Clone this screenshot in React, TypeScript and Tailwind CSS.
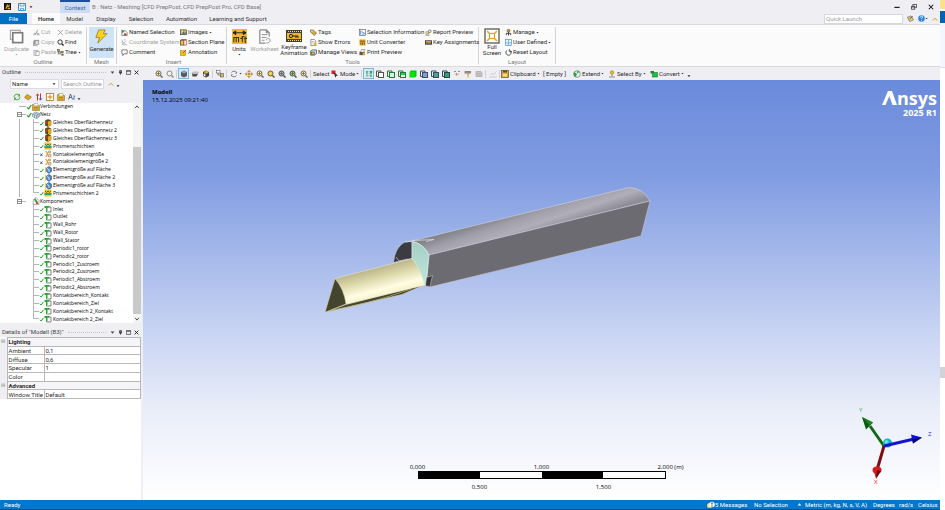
import type { ReactNode } from "react";
import clsx from "clsx";

const box = (fill: string, stroke = "#333") => (
  <>
    <path d="M1 4v9h3M1 4V2h9v2" fill="none" stroke={stroke} strokeWidth="2" />
    <rect x="5" y="5" width="10" height="10" fill={fill} stroke={stroke} strokeWidth="2" />
  </>
);

const lens = (fill: string, handle: string, mark: ReactNode = null) => (
  <>
    <circle cx="7" cy="7" r="5" fill={fill} stroke={handle} strokeWidth="2" />
    <path d="M11 11l4 4" stroke={handle} strokeWidth="3" />
    {mark}
  </>
);

const cross = <path d="M7 4v6M4 7h6" stroke="#7a5a00" strokeWidth="1.5" />;

const icons: Record<string, ReactNode> = {
  app: (
    <>
      <rect width="16" height="16" fill="#161310" />
      <path d="M3 13L7 3l3 1-4 9zM8 8l5-5v4l-4 3zM9 11h5v3H8z" fill="#e8ab1c" />
    </>
  ),
  save: (
    <>
      <path d="M1 1h14v14H1z" fill="#eef6fd" stroke="#3c8fd0" strokeWidth="2" />
      <path d="M4 1v5h8V1M5 15v-4h6v4" fill="none" stroke="#3c8fd0" strokeWidth="1.5" />
    </>
  ),
  duplicate: (
    <>
      <path d="M1.500 11V1.500H12" fill="none" stroke="#a9a9a9" strokeWidth="1.200" />
      <rect x="4" y="4" width="10.500" height="10.500" fill="#fff" stroke="#7c7c7c" strokeWidth="1.800" />
      <path d="M1 11h2M12 1v2" stroke="#8a8a8a" />
    </>
  ),
  cut: <path d="M5 13L11 2M11 13L7 6M1 13h5M9 13h6M2 10h4M10 10h4" stroke="#9b9b9b" strokeWidth="2" />,
  copy: (
    <>
      <rect x="2" y="2" width="12" height="11" fill="#999" />
      <rect x="6" y="5" width="6" height="6" fill="#e8e8e8" />
      <path d="M1 5v10h9" fill="none" stroke="#777" strokeWidth="1.5" />
    </>
  ),
  paste: (
    <>
      <rect x="2" y="3" width="9" height="12" fill="#ddd" stroke="#aaa" strokeWidth="1.5" />
      <rect x="7" y="6" width="7" height="9" fill="#fff" stroke="#999" strokeWidth="1.5" />
    </>
  ),
  delete: <path d="M2 2l12 12M14 2L2 14" stroke="#8d8d8d" strokeWidth="1.6" />,
  find: lens("#fff", "#222"),
  tree: (
    <>
      <path d="M3 3v8h6M3 7h8" fill="none" stroke="#333" strokeWidth="1.5" />
      <rect x="1" y="1" width="5" height="4" fill="#d9a520" stroke="#333" />
      <rect x="9" y="5" width="5" height="4" fill="#d9a520" stroke="#333" />
      <rect x="10" y="11" width="5" height="4" fill="#555" />
    </>
  ),
  bolt: <path d="M5 1h7l-2 4h4L4 15l2-6H2z" fill="#ffd21c" stroke="#9a7412" strokeWidth=".8" />,
  named: (
    <>
      <path d="M2 4h8l4 4v7H2z" fill="#fff" stroke="#555" strokeWidth="1.5" />
      <path d="M1 1l7 5-5 3z" fill="#16a34a" />
      <path d="M9 8l5 6H6z" fill="#c0392b" />
    </>
  ),
  coord: <path d="M3 2v11h11M3 13L12 4M2 5l10 8M6 2h5" fill="none" stroke="#b0b0b0" strokeWidth="1.6" />,
  comment: <path d="M2 2h12v9H7l-3 4v-4H2z" fill="#fff" stroke="#444" strokeWidth="1.5" />,
  images: (
    <>
      <rect x="1" y="2" width="14" height="11" fill="#f4d35e" stroke="#333" strokeWidth="1.5" />
      <path d="M3 11l4-5 3 3 3-4v6z" fill="#3a6fb0" />
      <path d="M9 2v11" stroke="#333" />
    </>
  ),
  section: (
    <>
      <path d="M1 3h8v11H1z" fill="#efc12e" stroke="#333" strokeWidth="1.5" />
      <path d="M9 3h6v11H9z" fill="#fff" stroke="#c0392b" strokeWidth="1.5" />
      <path d="M1 3l3-2h11" fill="none" stroke="#333" strokeWidth="1.5" />
    </>
  ),
  annotation: (
    <>
      <rect x="1" y="4" width="12" height="11" fill="#f1c40f" stroke="#8a6d0b" />
      <path d="M6 10l8-8" stroke="#c0392b" strokeWidth="2" />
    </>
  ),
  units: (
    <>
      <rect width="16" height="16" fill="#f0b92c" />
      <path d="M1 4h14M1 4l3-2v4zM15 4l-3-2v4z" fill="#222" stroke="#222" />
      <path d="M2 14V9h5v5M4.500 9v5M11 14V8h2M9 10h3M14 8v6h1M13 10h3" fill="none" stroke="#3a2d08" strokeWidth="1.100" />
    </>
  ),
  worksheet: (
    <>
      <path d="M3 1h7l3 3v4M3 1v14h6M10 1v3h3" fill="none" stroke="#8c8c8c" strokeWidth="1.300" />
      <path d="M5 6h6M5 9h5M5 12h3" stroke="#8c8c8c" />
      <path d="M10 12c0-3 4-2 4 0s-2 3-4 3" fill="none" stroke="#8c8c8c" />
    </>
  ),
  keyframe: (
    <>
      <rect y="2" width="16" height="12" fill="#4a4228" />
      <rect x="1" y="5" width="14" height="6" fill="#edb52b" />
      <path d="M2 3.500h13M2 12.500h13" stroke="#f4d98e" strokeDasharray="1 1" />
      <circle cx="5" cy="8" r="1.600" fill="none" stroke="#222" />
      <path d="M7 8h5v2M10 8v2" fill="none" stroke="#222" />
    </>
  ),
  tags: (
    <>
      <path d="M1 2h6l8 7-5 6-9-8z" fill="#d7a93a" stroke="#555" strokeWidth="1.300" />
      <circle cx="4.500" cy="5" r="1.300" fill="#fff" />
    </>
  ),
  errors: (
    <>
      <path d="M2 1h8l3 3v11H2z" fill="#fff" stroke="#555" strokeWidth="1.400" />
      <path d="M4 6h6M4 9h4" stroke="#666" />
      <path d="M11 7l5 8H7z" fill="#e6b422" />
    </>
  ),
  views: (
    <>
      <path d="M1 5l4-3h10v8l-4 4H1z" fill="#bcd4ee" stroke="#333" strokeWidth="1.400" />
      <rect x="3" y="7" width="7" height="6" fill="#e2b23a" stroke="#333" />
    </>
  ),
  info: (
    <>
      <rect x="1" y="1" width="14" height="14" fill="#fff" stroke="#555" strokeWidth="1.400" />
      <path d="M4 3v10M6 6l7 4M8 12l5-1" stroke="#2f7ed8" strokeWidth="2" />
    </>
  ),
  converter: (
    <>
      <rect x="1" y="1" width="14" height="14" fill="#e8b02e" />
      <path d="M2 5h12M4 8v5M8 8v5M12 8v5" stroke="#403208" strokeWidth="1.600" />
    </>
  ),
  print: (
    <>
      <rect x="1" y="6" width="12" height="8" fill="#655a43" />
      <path d="M4 6l2-5h7l-2 5" fill="#fff" stroke="#333" />
      <circle cx="11" cy="11" r="3" fill="#e0ac2c" />
    </>
  ),
  report: (
    <>
      <path d="M2 6h7v9H2z" fill="#ecd9a0" stroke="#666" />
      <circle cx="11" cy="5" r="3" fill="#fff" stroke="#444" strokeWidth="1.400" />
      <path d="M9 7l-4 5" stroke="#b8860b" strokeWidth="2" />
    </>
  ),
  keys: (
    <>
      <rect y="3" width="16" height="10" fill="#3c3c3c" />
      <path d="M2 6h12M2 9h12" stroke="#f0c544" strokeWidth="2" />
    </>
  ),
  full: (
    <>
      <rect x="1" y="1" width="14" height="14" fill="#fff" stroke="#4a4a4a" strokeWidth="1.200" />
      <rect x="5.500" y="5.500" width="5" height="5" fill="none" stroke="#d99f20" strokeWidth="1.200" />
      <path d="M3 3l3 3M13 3l-3 3M3 13l3-3M13 13l-3-3" stroke="#e0a928" strokeWidth="1.600" />
    </>
  ),
  manage: (
    <>
      <circle cx="8" cy="4" r="3.500" fill="#c79a2b" stroke="#333" />
      <path d="M8 7v3M3 14v-4h10v4M8 10v5" fill="none" stroke="#333" strokeWidth="2" />
    </>
  ),
  user: (
    <>
      <rect x="1" y="1" width="14" height="14" fill="#e6f2fd" stroke="#4a90d9" strokeWidth="1.500" />
      <path d="M8 1v14M1 9h14" stroke="#4a90d9" strokeWidth="1.300" />
    </>
  ),
  reset: (
    <>
      <path d="M11 3a6 6 0 1 1-6 0" fill="none" stroke="#222" strokeWidth="1.800" />
      <path d="M10 0v6h6" fill="none" stroke="#222" strokeWidth="1.600" />
    </>
  ),
  zoomIn: lens("#fff2c0", "#666", cross),
  zoomOut: lens("#f3f3f3", "#8a8a8a"),
  zoomFit: lens("#f6cf56", "#6b5a2c"),
  zoomBlue: lens("#9fc0dc", "#454d5a", cross),
  zoomGreen: lens("#92cfa4", "#44554a", cross),
  cube: (
    <>
      <path d="M8 1l6 3v8l-6 3-6-3V4z" fill="#555b60" />
      <path d="M8 1l6 3-6 3-6-3z" fill="#9aa3a9" />
    </>
  ),
  wire: (
    <>
      <path d="M2 7h12l-3 6H3z" fill="#4c4c4c" />
      <path d="M4 4h10v4H2z" fill="#d5d5d5" stroke="#777" strokeWidth=".8" />
    </>
  ),
  edges: (
    <>
      <path d="M8 1l6 3v8l-6 3-6-3V4z" fill="#444" />
      <path d="M8 1l6 3-4 3H3z" fill="#e0b23c" />
      <path d="M3 8l4 1v4l-4-2z" fill="#fff" />
    </>
  ),
  graph: (
    <>
      <path d="M4 4v6h8" fill="none" stroke="#555" strokeWidth="1.500" />
      <rect x="1" y="1" width="7" height="5" fill="#fff" stroke="#444" />
      <rect x="9" y="7" width="6" height="7" fill="#d9b45a" stroke="#444" />
    </>
  ),
  rotate: (
    <>
      <path d="M13 5A6 6 0 0 0 3 5M3 11a6 6 0 0 0 10 0" fill="none" stroke="#666" strokeWidth="1.600" />
      <path d="M14 3v4h-4zM2 13V9h4z" fill="#666" />
    </>
  ),
  pan: <path d="M8 0l3 4H5zM8 16l-3-4h6zM0 8l4-3v6zM16 8l-4 3V5zM6 6h4v4H6z" fill="#e0a21e" stroke="#7d5d13" strokeWidth=".5" />,
  pick: (
    <>
      <path d="M1 1h8v7H1z" fill="#e02020" />
      <path d="M5 4l9 7-4 1-1 4z" fill="#333" />
    </>
  ),
  vertex: (
    <>
      <path d="M4 2v12M12 2v12M2 4h4M10 12h4" stroke="#1f9a38" strokeWidth="2" strokeDasharray="3 1" />
      <path d="M8 2v12" stroke="#777" strokeDasharray="2 2" />
      <circle cx="12" cy="4" r="2.500" fill="#1fae3a" />
    </>
  ),
  selVertex: box("#fff", "#4a5a4c"),
  selEdge: box("#d8f5dc", "#237a39"),
  selFace: (
    <>
      {box("#fff", "#237a39")}
      <path d="M6 6h8v4H6z" fill="#27d046" />
    </>
  ),
  selBody: (
    <>
      <rect x="1" y="4" width="11" height="11" fill="#04e404" />
      <path d="M1 4l3-3h11v11l-3 3V4z" fill="#05c70a" />
    </>
  ),
  selNode: box("#7fa0c4", "#3e4f66"),
  selElement: box("#5a9c8c", "#33506a"),
  selDark: box("#3aa05a", "#26435a"),
  filter: (
    <>
      <path d="M2 3h4M10 3h4M7 6v4" stroke="#8d8d8d" strokeWidth="2" />
      <path d="M4 7l4 4 4-4" fill="none" stroke="#d0a23a" strokeWidth="2" />
    </>
  ),
  hammer: (
    <>
      <path d="M1 2h13v5H1z" fill="#8a8a86" />
      <path d="M5 7h6l-2 3v5H7v-5z" fill="#d3a437" />
    </>
  ),
  greyBox: (
    <>
      <path d="M2 3h10l2 3v7H2z" fill="#ccc" stroke="#aaa" strokeWidth="1.500" />
      <path d="M4 7h8M4 10h8" stroke="#999" />
    </>
  ),
  chart: <path d="M1 14h14M2 11l4-4 3 2 6-6" fill="none" stroke="#c6c6c6" strokeWidth="1.800" />,
  clipboard: (
    <>
      <rect x="1" y="1" width="14" height="14" fill="#e2ab31" stroke="#4e4020" strokeWidth="1.300" />
      <path d="M4 1h8v4H4z" fill="#5c512f" />
      <path d="M4 8h8v5H4z" fill="#f7dc8c" />
    </>
  ),
  extend: (
    <>
      <circle cx="8" cy="8" r="6.500" fill="#fff" stroke="#555" strokeWidth="1.300" />
      <path d="M8 8L3 4a6 6 0 0 0 3 10zM8 8l5-4-4-3z" fill="#21a83c" />
    </>
  ),
  selectBy: (
    <>
      <circle cx="8" cy="5" r="3.500" fill="#e3b637" stroke="#88702a" />
      <path d="M2 14h12M8 8v6" stroke="#888" strokeWidth="1.800" />
    </>
  ),
  convert: (
    <>
      <rect x="5" y="5" width="10" height="9" fill="#13c93a" stroke="#165c24" />
      <path d="M1 2h7v5H1z" fill="#2c7a3c" />
    </>
  ),
  refresh: (
    <>
      <path d="M13 5A6 6 0 0 0 2 8M3 11a6 6 0 0 0 11-3" fill="none" stroke="#47ad3d" strokeWidth="2" />
      <path d="M14 1v6H9zM2 15V9h5z" fill="#47ad3d" />
    </>
  ),
  eraser: <path d="M6 3l9 5-6 6-8-5z" fill="#dfa321" stroke="#70541a" />,
  sort: (
    <>
      <path d="M5 15V3M11 1v12" stroke="#d0322c" strokeWidth="2" />
      <path d="M1 5l4-4 4 4z" fill="#d0322c" />
      <path d="M7 11l4 4 4-4z" fill="#2a67b8" />
    </>
  ),
  expand: (
    <>
      <rect x="1" y="1" width="14" height="14" fill="#fff" stroke="#a77a16" strokeWidth="1.600" />
      <path d="M8 3v10M3 8h10" stroke="#c08a17" strokeWidth="2" />
    </>
  ),
  folder: (
    <>
      <path d="M1 3h6l2 2h6v10H1z" fill="#e5b437" stroke="#7d6120" />
      <path d="M4 1h8v5H4z" fill="#fffbe8" stroke="#888" />
      <path d="M3 9h10M3 12h10" stroke="#7d6120" />
    </>
  ),
  az: (
    <>
      <path d="M1 13L5 2l4 11M2 9h5" fill="none" stroke="#444" strokeWidth="1.500" />
      <path d="M10 6h4l-4 6h4" fill="none" stroke="#3875bd" strokeWidth="1.500" />
    </>
  ),
  mesh: (
    <>
      <path d="M3 3l5-2 6 2v9l-6 3-5-2z" fill="#4c5a17" stroke="#2b2c12" />
      <path d="M8 5l6-2v9l-6 3z" fill="#e2a71c" />
      <path d="M3 3l5 2v5L3 8z" fill="#c52f20" />
    </>
  ),
  layers: (
    <>
      <rect x="1" y="1" width="14" height="14" fill="#f3c31b" />
      <path d="M1 8h14v4H1z" fill="#1ea39a" />
      <path d="M2 4l3 3 3-3 3 3 3-3" fill="none" stroke="#2b7a58" strokeWidth="2" />
    </>
  ),
  contact: (
    <>
      <path d="M3 3c5 0 5 10 0 10" fill="none" stroke="#e58817" strokeWidth="2.400" />
      <path d="M9 2h4v4H9zM9 9h5v5H9z" fill="#f4ddb0" stroke="#916833" />
    </>
  ),
  element: (
    <>
      <path d="M5 4l5-3 5 3v7l-5 4-5-4z" fill="#4d87c4" stroke="#26405e" />
      <path d="M6 5l4 2v5" fill="none" stroke="#fff" strokeWidth="1.500" />
      <path d="M3 2v12" stroke="#e3b83e" strokeWidth="1.500" />
    </>
  ),
  netz: (
    <>
      <path d="M1 6l6-4 8 3v6l-6 4-8-4z" fill="#dae8f4" stroke="#44627d" />
      <path d="M1 6l8 3 6-4M9 9v6M5 4l7 3v6M5 8v5" fill="none" stroke="#44627d" />
    </>
  ),
  component: (
    <>
      <path d="M5 4h9v10H5z" fill="#fff" stroke="#3c4a3e" strokeWidth="1.300" />
      <path d="M1 2h10v3H7v7H4V6H1z" fill="#25aa37" />
    </>
  ),
  components: (
    <>
      <path d="M3 5l5-4 6 6v8H2z" fill="#f4f4f4" stroke="#666" />
      <path d="M4 5l3-2 5 8-3 2z" fill="#2aa342" />
      <path d="M9 9l4 5H8z" fill="#cf3a2c" />
    </>
  ),
  ok: <path d="M3 9l4 4 7-10" fill="none" stroke="#12a01b" strokeWidth="3" />,
  off: <path d="M4 5l7 8M11 5l-7 8" stroke="#163b8c" strokeWidth="2.600" />,
  caret: <path d="M2 5h12l-6 7z" fill="currentColor" />,
  up: <path d="M2 12l6-6 6 6" fill="none" stroke="#d09a1c" strokeWidth="2.600" />,
  pin: <path d="M5 2h6v7H5zM3 9h10M8 9v6M9 2v7" fill="none" stroke="#222" strokeWidth="2.200" />,
  max: <path d="M1 2h14v12H1zM1 4h14" fill="none" stroke="#222" strokeWidth="2" />,
  restore: <path d="M5 5V1h10v8h-4M1 6h9v8H1zM1 8h9" fill="none" stroke="#222" strokeWidth="2" />,
  close: <path d="M2 2l12 12M14 2L2 14" stroke="#111" strokeWidth="2.800" />,
  min: <path d="M1 9h14" stroke="#111" strokeWidth="3" />,
  scrollUp: <path d="M3 11l5-6 5 6" fill="none" stroke="#444" strokeWidth="2.500" />,
  scrollDown: <path d="M3 5l5 6 5-6" fill="none" stroke="#444" strokeWidth="2.500" />,
  help: (
    <>
      <circle cx="8" cy="8" r="7.500" fill="#2b84dc" />
      <path d="M5 6c0-4 6-4 6-1 0 2-3 2-3 4M8 11v2" fill="none" stroke="#fff" strokeWidth="1.800" />
    </>
  ),
  note: (
    <>
      <path d="M1 5l8-3 6 9-9 4z" fill="#e9cc72" stroke="#555" strokeWidth="1.300" />
      <path d="M6 9l7-6" stroke="#444" strokeWidth="2" />
    </>
  ),
  message: (
    <>
      <circle cx="5" cy="9" r="5" fill="#f3dd8c" />
      <circle cx="10" cy="7" r="5.500" fill="#fff" />
      <path d="M10 3v4M10 9v2" stroke="#25327e" strokeWidth="2.400" />
    </>
  ),
};

function Icon({ name, className = "size-2" }: { name: string; className?: string }) {
  return (
    <svg viewBox="0 0 16 16" aria-hidden="true" className={clsx("block shrink-0", className)}>
      {icons[name]}
    </svg>
  );
}

type Tool = { icon: string; label: string; off?: boolean; menu?: boolean };

function ToolColumn({ tools, className }: { tools: Tool[]; className: string }) {
  return (
    <div className={clsx("flex shrink-0 flex-col", className)}>
      {tools.map((t) => (
        <button
          key={t.label}
          className={clsx("flex h-[10px] items-center gap-px whitespace-nowrap", t.off && "text-[#a3a3a3]")}
        >
          <Icon name={t.icon} className="size-[7px]" />
          {t.label}
          {t.menu && <Icon name="caret" className="size-[3px]" />}
        </button>
      ))}
    </div>
  );
}

type BigToolProps = { icon: string; lines: string[]; className: string; size?: string; off?: boolean; menu?: boolean };

function BigTool({ icon, lines, className, size = "size-[15px]", off, menu }: BigToolProps) {
  return (
    <button className={clsx("flex h-[31px] shrink-0 flex-col items-center pt-px leading-[6px]", off && "text-[#a3a3a3]", className)}>
      <span className="flex h-[16px] items-center">
        <Icon name={icon} className={size} />
      </span>
      <span className={clsx("whitespace-nowrap", lines.length === 1 && "pt-[2px]")}>
        {lines.map((l) => (
          <span key={l} className="block">{l}</span>
        ))}
      </span>
      {menu && <Icon name="caret" className="mt-px size-[3px]" />}
    </button>
  );
}

function Group({ title, className, children }: { title: string; className: string; children: ReactNode }) {
  return (
    <section className={clsx("my-[2px] shrink-0 border-r border-[#d4d4d8]", className)}>
      <div className="flex h-[31px]">{children}</div>
      <h2 className="text-center leading-[7px] text-[#777]">{title}</h2>
    </section>
  );
}

function Ribbon() {
  return (
    <div className="flex h-[43px] shrink-0 border-y border-[#d9d9de] bg-[#fbfbfb]">
      <Group title="Outline" className="w-[87px]">
        <BigTool icon="duplicate" lines={["Duplicate"]} className="w-[33px]" off menu />
        <ToolColumn
          className="w-[24px]"
          tools={[
            { icon: "cut", label: "Cut", off: true },
            { icon: "copy", label: "Copy", off: true },
            { icon: "paste", label: "Paste", off: true },
          ]}
        />
        <ToolColumn
          className="w-[28px]"
          tools={[
            { icon: "delete", label: "Delete", off: true },
            { icon: "find", label: "Find" },
            { icon: "tree", label: "Tree", menu: true },
          ]}
        />
      </Group>
      <Group title="Mesh" className="w-[30px] px-[2px]">
        <BigTool icon="bolt" lines={["Generate"]} className="w-full bg-[#cfe3f6]" />
      </Group>
      <Group title="Insert" className="w-[110px] pl-1">
        <ToolColumn
          className="w-[59px]"
          tools={[
            { icon: "named", label: "Named Selection" },
            { icon: "coord", label: "Coordinate System", off: true },
            { icon: "comment", label: "Comment" },
          ]}
        />
        <ToolColumn
          className="w-[44px]"
          tools={[
            { icon: "images", label: "Images", menu: true },
            { icon: "section", label: "Section Plane" },
            { icon: "annotation", label: "Annotation" },
          ]}
        />
      </Group>
      <Group title="Tools" className="w-[252px]">
        <BigTool icon="units" lines={["Units"]} className="w-[24px]" menu />
        <BigTool icon="worksheet" lines={["Worksheet"]} className="w-[27px]" off />
        <BigTool icon="keyframe" lines={["Keyframe", "Animation"]} className="w-[32px]" size="size-4" />
        <ToolColumn
          className="w-[49px]"
          tools={[
            { icon: "tags", label: "Tags" },
            { icon: "errors", label: "Show Errors" },
            { icon: "views", label: "Manage Views" },
          ]}
        />
        <ToolColumn
          className="w-[66px]"
          tools={[
            { icon: "info", label: "Selection Information" },
            { icon: "converter", label: "Unit Converter" },
            { icon: "print", label: "Print Preview" },
          ]}
        />
        <ToolColumn
          className="w-[52px]"
          tools={[
            { icon: "report", label: "Report Preview" },
            { icon: "keys", label: "Key Assignments" },
          ]}
        />
      </Group>
      <Group title="Layout" className="w-[77px]">
        <BigTool icon="full" lines={["Full", "Screen"]} className="w-[26px]" size="size-4" />
        <ToolColumn
          className="w-[46px]"
          tools={[
            { icon: "manage", label: "Manage", menu: true },
            { icon: "user", label: "User Defined", menu: true },
            { icon: "reset", label: "Reset Layout" },
          ]}
        />
      </Group>
    </div>
  );
}

const tabs = [
  { label: "Model", width: "w-[29px]" },
  { label: "Display", width: "w-[34px]" },
  { label: "Selection", width: "w-[36px]" },
  { label: "Automation", width: "w-[45px]" },
  { label: "Learning and Support", width: "w-[68px]" },
];

function TitleBar() {
  return (
    <header className="flex h-[24px] shrink-0 flex-col bg-[#eeeef3]">
      <div className="flex h-[13px] items-center">
        <div className="flex w-[60px] items-center gap-[7px] pl-1">
          <Icon name="app" className="size-[7px]" />
          <button aria-label="Save"><Icon name="save" /></button>
          <button aria-label="Customize" className="-ml-1"><Icon name="caret" className="size-1" /></button>
        </div>
        <div className="h-full w-[30px] border-t-2 border-[#1d4fa0] bg-[#cbdcf4] text-center leading-[11px] text-[#3f6295]">
          Context
        </div>
        <h1 className="flex-1 pl-[2px] text-[#777]">B : Netz - Meshing [CFD PrepPost, CFD PrepPost Pro, CFD Base]</h1>
        <div className="flex gap-[11px] pr-[6px]">
          <button aria-label="Minimize"><Icon name="min" className="size-[6px]" /></button>
          <button aria-label="Restore"><Icon name="restore" className="size-[6px]" /></button>
          <button aria-label="Close"><Icon name="close" className="size-[6px]" /></button>
        </div>
      </div>
      <nav className="flex h-[11px] items-stretch">
        <button className="w-[27px] bg-[#0072c6] text-white">File</button>
        <button className="ml-[5px] w-[28px] bg-[#fbfbfb] font-semibold">Home</button>
        {tabs.map((t) => (
          <button key={t.label} className={clsx("whitespace-nowrap text-[#333]", t.width)}>{t.label}</button>
        ))}
        <div className="ml-auto flex items-center gap-1 pr-[2px]">
          <input
            aria-label="Quick Launch"
            placeholder="Quick Launch"
            className="h-[10px] w-[79px] border border-[#d8d8dc] bg-white px-px placeholder:text-[#9a9a9a]"
          />
          <button aria-label="Feedback"><Icon name="note" className="size-[7px]" /></button>
          <button aria-label="Help" className="flex items-center">
            <Icon name="help" className="size-[7px]" />
            <Icon name="caret" className="size-[3px]" />
          </button>
          <button aria-label="Collapse ribbon"><Icon name="up" className="size-[6px]" /></button>
        </div>
      </nav>
    </header>
  );
}

function IconButton({ name, active }: { name: string; active?: boolean }) {
  return (
    <button
      aria-label={name}
      className={clsx("flex h-[11px] w-[11px] shrink-0 items-center justify-center", active && "border border-[#7fb6de] bg-[#d5e9f7]")}
    >
      <Icon name={name} className="size-[8px]" />
    </button>
  );
}

function MenuButton({ icon, label, className }: { icon: string; label: string; className: string }) {
  return (
    <button className={clsx("flex shrink-0 items-center gap-px whitespace-nowrap", className)}>
      <Icon name={icon} />
      {label}
      <Icon name="caret" className="size-[3px]" />
    </button>
  );
}

const Divider = () => <span className="mx-px h-2 w-px shrink-0 bg-[#d0d0d6]" />;

function GraphicsToolbar() {
  return (
    <div className="flex h-[13px] shrink-0 items-center bg-[#eeeef3] pl-[10px]">
      <IconButton name="zoomIn" />
      <IconButton name="zoomOut" />
      <Divider />
      <IconButton name="cube" active />
      <IconButton name="wire" />
      <IconButton name="edges" />
      <Divider />
      <IconButton name="graph" />
      <Divider />
      <IconButton name="rotate" />
      <Icon name="caret" className="mr-px size-[3px]" />
      <IconButton name="pan" />
      <IconButton name="zoomIn" />
      <IconButton name="zoomFit" />
      <IconButton name="zoomBlue" />
      <IconButton name="zoomGreen" />
      <IconButton name="zoomIn" />
      <Divider />
      <span className="w-[19px] pl-px">Select</span>
      <MenuButton icon="pick" label="Mode" className="w-[29px]" />
      <Divider />
      <IconButton name="vertex" active />
      <IconButton name="selVertex" />
      <IconButton name="selEdge" />
      <IconButton name="selFace" />
      <IconButton name="selBody" />
      <IconButton name="selNode" />
      <IconButton name="selElement" />
      <IconButton name="selDark" />
      <IconButton name="filter" />
      <IconButton name="hammer" />
      <IconButton name="greyBox" />
      <Divider />
      <IconButton name="chart" />
      <Divider />
      <MenuButton icon="clipboard" label="Clipboard" className="w-[42px]" />
      <span className="w-[30px] whitespace-nowrap">[ Empty ]</span>
      <MenuButton icon="extend" label="Extend" className="w-[35px]" />
      <MenuButton icon="selectBy" label="Select By" className="w-[42px]" />
      <MenuButton icon="convert" label="Convert" className="w-[37px]" />
      <Icon name="caret" className="mt-1 size-1" />
    </div>
  );
}

function PanelHeader({ title }: { title: string }) {
  return (
    <div className="flex h-[10px] shrink-0 items-center bg-[#eeeef3] px-[2px] text-[#444]">
      <h2 className="whitespace-nowrap">{title}</h2>
      <span className="mx-1 h-px flex-1 border-t border-dotted border-[#c4c4cc]" />
      <div className="flex items-center gap-[3px]">
        <button aria-label="Panel menu"><Icon name="caret" className="size-[5px]" /></button>
        <button aria-label="Pin"><Icon name="pin" className="size-[5px]" /></button>
        <button aria-label="Maximize"><Icon name="max" className="size-[5px]" /></button>
        <button aria-label="Close"><Icon name="close" className="size-[5px]" /></button>
      </div>
    </div>
  );
}

type Node = { label: string; icon: string; parent?: string; off?: boolean };

const nodes: Node[] = [
  { label: "Verbindungen", icon: "folder" },
  { label: "Netz", icon: "netz" },
  { label: "Gleiches Oberflächennetz", icon: "mesh", parent: "Netz" },
  { label: "Gleiches Oberflächennetz 2", icon: "mesh", parent: "Netz" },
  { label: "Gleiches Oberflächennetz 3", icon: "mesh", parent: "Netz" },
  { label: "Prismenschichten", icon: "layers", parent: "Netz" },
  { label: "Kontaktelementgröße", icon: "contact", parent: "Netz", off: true },
  { label: "Kontaktelementgröße 2", icon: "contact", parent: "Netz", off: true },
  { label: "Elementgröße auf Fläche", icon: "element", parent: "Netz" },
  { label: "Elementgröße auf Fläche 2", icon: "element", parent: "Netz" },
  { label: "Elementgröße auf Fläche 3", icon: "element", parent: "Netz" },
  { label: "Prismenschichten 2", icon: "layers", parent: "Netz" },
  { label: "Komponenten", icon: "components" },
  ...[
    "Inlet",
    "Outlet",
    "Wall_Rohr",
    "Wall_Rotor",
    "Wall_Stator",
    "periodic1_rotor",
    "Periodic2_rotor",
    "Periodic1_Zustroem",
    "Periodic2_Zustroem",
    "Periodic1_Abstroem",
    "Periodic2_Abstroem",
    "Kontaktbereich_Kontakt",
    "Kontaktbereich_Ziel",
    "Kontaktbereich 2_Kontakt",
    "Kontaktbereich 2_Ziel",
  ].map((label) => ({ label, icon: "component", parent: "Komponenten" })),
];

function TreeRow({ node, last }: { node: Node; last: boolean }) {
  if (!node.parent) {
    const expandable = node.label !== "Verbindungen";
    return (
      <li className="flex min-h-0 items-center whitespace-nowrap">
        <span className="flex w-[26px] items-center pl-[17px]">
          {expandable && (
            <span className="flex size-[5px] items-center justify-center border border-[#8b8b8b] bg-white">
              <span className="h-px w-[3px] bg-[#999]" />
            </span>
          )}
          <span className={clsx("h-px flex-1 bg-[#b5b5b5]", !expandable && "ml-[2px]")} />
        </span>
        <Icon name="ok" className={clsx("size-[6px]", node.label === "Komponenten" && "invisible")} />
        <Icon name={node.icon} />
        <span>{node.label}</span>
      </li>
    );
  }
  return (
    <li className="flex min-h-0 items-center whitespace-nowrap">
      <span className={clsx("ml-[19px] h-full w-[14px] border-l", node.parent === "Netz" ? "border-[#b5b5b5]" : "border-transparent")} />
      <span className={clsx("w-[6px] border-[#b5b5b5]", last ? "mb-1 h-1 border-b border-l" : "flex h-full items-center border-l")}>
        {!last && <span className="h-px w-full bg-[#b5b5b5]" />}
      </span>
      <Icon name={node.off ? "off" : "ok"} className="mt-px size-[5px]" />
      <Icon name={node.icon} className="mr-px size-[8px]" />
      <span>{node.label}</span>
    </li>
  );
}

function Outline() {
  return (
    <section className="shrink-0">
      <PanelHeader title="Outline" />
      <div className="flex h-[13px] items-center gap-[2px] bg-[#eeeef3] pl-[10px]">
        <div className="relative">
          <select aria-label="Search field" className="h-[10px] w-[49px] appearance-none border border-[#dcdce2] bg-white px-px">
            <option>Name</option>
          </select>
          <Icon name="caret" className="pointer-events-none absolute top-[3px] right-[3px] size-1" />
        </div>
        <input
          aria-label="Search Outline"
          placeholder="Search Outline"
          className="h-[10px] w-[43px] border border-[#dcdce2] bg-white px-px placeholder:text-[#999]"
        />
        <button aria-label="Collapse" className="ml-[2px]"><Icon name="up" className="size-[6px]" /></button>
        <button aria-label="More" className="mt-1"><Icon name="caret" className="size-1" /></button>
      </div>
      <div className="flex h-[13px] items-center bg-[#eeeef3] pl-[11px]">
        {["refresh", "eraser", "sort", "expand", "folder", "az"].map((name) => (
          <IconButton key={name} name={name} />
        ))}
        <Icon name="caret" className="mt-1 size-1" />
      </div>
      <div className="flex bg-white">
        <ul className="grid h-[220px] flex-1 auto-rows-fr font-['Open_Sans',sans-serif] text-[5px] leading-[7px] text-black">
          {nodes.map((n, i) => (
            <TreeRow key={n.label} node={n} last={nodes[i + 1]?.parent !== n.parent} />
          ))}
        </ul>
        <div className="flex w-2 flex-col items-center justify-between bg-[#f4f4f4] py-px">
          <Icon name="scrollUp" className="size-[6px]" />
          <span className="mt-[37px] mb-[2px] w-full flex-1 bg-[#c9c9c9]" />
          <Icon name="scrollDown" className="size-[6px]" />
        </div>
      </div>
    </section>
  );
}

const details = [
  { title: "Lighting", rows: [["Ambient", "0,1"], ["Diffuse", "0,6"], ["Specular", "1"], ["Color", ""]] },
  { title: "Advanced", rows: [["Window Title", "Default"]] },
];

function Details() {
  return (
    <section className="mt-1 flex flex-1 flex-col bg-white">
      <PanelHeader title={'Details of "Modell (B3)"'} />
      <table className="h-[62px] w-full table-fixed border-collapse text-left leading-[7px]">
        <colgroup>
          <col className="w-[7px]" />
          <col className="w-[37px]" />
          <col />
        </colgroup>
        {details.map((d) => (
          <tbody key={d.title}>
            <tr>
              <td className="bg-[#eeeef3] text-center text-[5px] text-[#888]">⊟</td>
              <th colSpan={2} className="border border-[#b8b8b8] bg-[#f5f5f8] px-px font-bold">{d.title}</th>
            </tr>
            {d.rows.map(([name, value]) => (
              <tr key={name}>
                <td className="bg-[#eeeef3]" />
                <th className="border border-[#b8b8b8] px-px font-normal whitespace-nowrap">{name}</th>
                <td className="border border-[#b8b8b8] px-px">{value}</td>
              </tr>
            ))}
          </tbody>
        ))}
      </table>
    </section>
  );
}

function ModelDrawing() {
  return (
    <svg viewBox="143 80 797 420" className="absolute inset-0 h-full w-full" role="img" aria-label="Geometry">
      <defs>
        <linearGradient id="shell" gradientUnits="userSpaceOnUse" x1="520" y1="210" x2="529" y2="237">
          <stop offset="0" stopColor="#85858d" />
          <stop offset=".3" stopColor="#a09fab" />
          <stop offset=".65" stopColor="#b0aeb9" />
          <stop offset="1" stopColor="#8f8e98" />
        </linearGradient>
        <linearGradient id="blade" gradientUnits="userSpaceOnUse" x1="374" y1="268" x2="382" y2="299">
          <stop offset="0" stopColor="#b9b48c" />
          <stop offset=".3" stopColor="#dad5a6" />
          <stop offset=".7" stopColor="#fffde4" />
          <stop offset="1" stopColor="#f2edbf" />
        </linearGradient>
        <linearGradient id="inlet" x1="0" y1="0" x2="0" y2="1">
          <stop offset="0" stopColor="#a3cfc5" />
          <stop offset="1" stopColor="#c3e8da" />
        </linearGradient>
      </defs>
      <path d="M412 241.500L405 242Q395 247 393.500 262.500L412 258.500Z" fill="#3c3b42" stroke="#d8d8de" strokeWidth=".5" />
      <path d="M396 257l3 4 9-2" fill="none" stroke="#d8d8de" strokeWidth=".6" />
      <path d="M405 242L412 241L629 187.500Q643 188 650 201L429 255Q424 244 412 241Z" fill="url(#shell)" stroke="#dcdce0" strokeWidth=".5" />
      <path d="M413 240.500L434 239.500L426 241.500" fill="none" stroke="#dedee4" strokeWidth=".7" />
      <path d="M429 255L650 201L641 236L430 287L426 286Z" fill="#6c6b71" stroke="#c9c9cf" strokeWidth=".6" />
      <path d="M412 241.500Q423 243 429 255L426 286L423 283Q419 268 412 258.500Z" fill="url(#inlet)" stroke="#eaf6f2" strokeWidth=".5" />
      <path d="M426.500 277.500L432.500 275.500L430 286.500L425.500 286Z" fill="#37373c" stroke="#d4d4da" strokeWidth=".5" />
      <path d="M325 312.300L346 304.500L424 285L402 294.500Z" fill="#45442e" stroke="#d9d6a6" strokeWidth=".6" />
      <path d="M329 310.500Q366 305 411 289" fill="none" stroke="#b9b581" strokeWidth=".7" />
      <path d="M335 278.500L412 258.500Q420 268 424.500 285L346 304Q344 289 335 278.500Z" fill="url(#blade)" stroke="#efeccb" strokeWidth=".5" />
      <path d="M335 278.500Q344 289 346 304L325 312.300Z" fill="#45452f" stroke="#d9d6a6" strokeWidth=".6" />
    </svg>
  );
}

function Triad() {
  return (
    <svg viewBox="854 404 82 82" className="absolute right-1 bottom-[14px] size-[82px]" role="img" aria-label="Axes">
      <path d="M884 446L870 426" stroke="#116b16" strokeWidth="3" />
      <path d="M862 417l11 5.500-7 7z" fill="#0b5a10" />
      <path d="M862 417l11 5.500-3 3z" fill="#1b8622" />
      <path d="M884 446L877 470" stroke="#7a1014" strokeWidth="3" />
      <path d="M876 478.500l-3-10 8.500 1z" fill="#d01414" />
      <ellipse cx="877" cy="470" rx="4.500" ry="3.500" fill="#d81c1c" />
      <path d="M876 479l1-9 4 1z" fill="#6a0c0c" />
      <circle cx="887.500" cy="443" r="4.500" fill="#16b6c0" />
      <circle cx="886.500" cy="442" r="2" fill="#5fe0e4" />
      <path d="M884 446L914 439" stroke="#1216c8" strokeWidth="3" />
      <path d="M922 437.500l-11-3 2 9z" fill="#1010d8" />
      <path d="M922 437.500l-10 1.500 1 4.500z" fill="#080878" />
      <text x="859" y="412" fontSize="6" fill="#2fae38">Y</text>
      <text x="928" y="436" fontSize="6" fill="#2a2fd0">Z</text>
      <text x="874" y="484" fontSize="6" fill="#e02a2a">X</text>
    </svg>
  );
}

function Viewport() {
  return (
    <main className="relative flex flex-1 flex-col justify-between overflow-hidden bg-[linear-gradient(to_bottom,#6a8adb_0%,#7f9be1_22%,#c8d4f3_60%,#e9edf9_78%,#ffffff_100%)] font-['Open_Sans',sans-serif]">
      <ModelDrawing />
      <div className="relative flex items-start justify-between pt-2 pr-[3px] pl-[9px]">
        <div className="text-[6px] leading-2 text-black">
          <h2 className="font-bold">Modell</h2>
          <p>15.12.2025 09:21:40</p>
        </div>
        <div className="flex flex-col items-end font-bold text-white">
          <div className="flex items-baseline text-[18px] leading-[20px]">
            <svg viewBox="0 0 15 14" className="h-[14px] w-[15px]" aria-label="A">
              <path d="M0 14L6 0h3.500L3.500 14zM5.500 0h4.500l5 14h-4.500z" fill="#fff" />
            </svg>
            nsys
          </div>
          <p className="text-[9px] leading-[9px]">2025 R1</p>
        </div>
      </div>
      <div className="relative flex flex-col items-center pb-[9px] text-[6px] leading-[8px] text-black">
        <div className="grid w-[372px] grid-cols-3 text-center">
          <span>0,000</span>
          <span>1,000</span>
          <span className="pl-[10px]">2,000 (m)</span>
        </div>
        <div className="grid h-2 w-[248px] grid-cols-4 border border-black bg-white">
          <span className="bg-black" />
          <span />
          <span className="bg-black" />
        </div>
        <div className="grid w-[248px] grid-cols-2 pt-1 text-center">
          <span>0,500</span>
          <span>1,500</span>
        </div>
      </div>
      <Triad />
    </main>
  );
}

function StatusBar() {
  return (
    <footer className="flex h-[10px] shrink-0 items-center border-b border-[#0a4f86] bg-[#0078cf] pr-[3px] pl-1 whitespace-nowrap text-white">
      <span>Ready</span>
      <button className="ml-auto flex w-[47px] items-center"><Icon name="message" />5 Messages</button>
      <span className="w-[43px]">No Selection</span>
      <button className="flex w-[76px] items-center gap-[3px]">
        <Icon name="caret" className="size-[5px] rotate-180" />
        Metric (m, kg, N, s, V, A)
      </button>
      <span className="w-[26px]">Degrees</span>
      <span className="w-[19px]">rad/s</span>
      <span className="w-[19px]">Celsius</span>
    </footer>
  );
}

export default function App() {
  return (
    <div className="flex min-h-screen bg-white font-[Roboto,sans-serif] text-[6px] leading-[8px] text-[#2c2c2c]">
      <div className="flex min-w-0 flex-1 flex-col">
        <TitleBar />
        <Ribbon />
        <div className="flex flex-1 bg-[#eeeef3]">
          <aside className="mr-[2px] flex w-[141px] shrink-0 flex-col">
            <Outline />
            <Details />
          </aside>
          <div className="flex min-w-0 flex-1 flex-col">
            <GraphicsToolbar />
            <Viewport />
          </div>
        </div>
        <StatusBar />
      </div>
      <div className="flex w-[5px] shrink-0 flex-col">
        <span className="mb-[2px] h-[9px] bg-[#fbe38b]" />
        <span className="h-[12px] bg-[#0063b1]" />
        <span className="h-[45px] border-b border-[#dcdfe5] bg-[#f3f6fa]" />
        <span className="mt-[299px] h-[11px] bg-[#d2d2d8]" />
      </div>
    </div>
  );
}
